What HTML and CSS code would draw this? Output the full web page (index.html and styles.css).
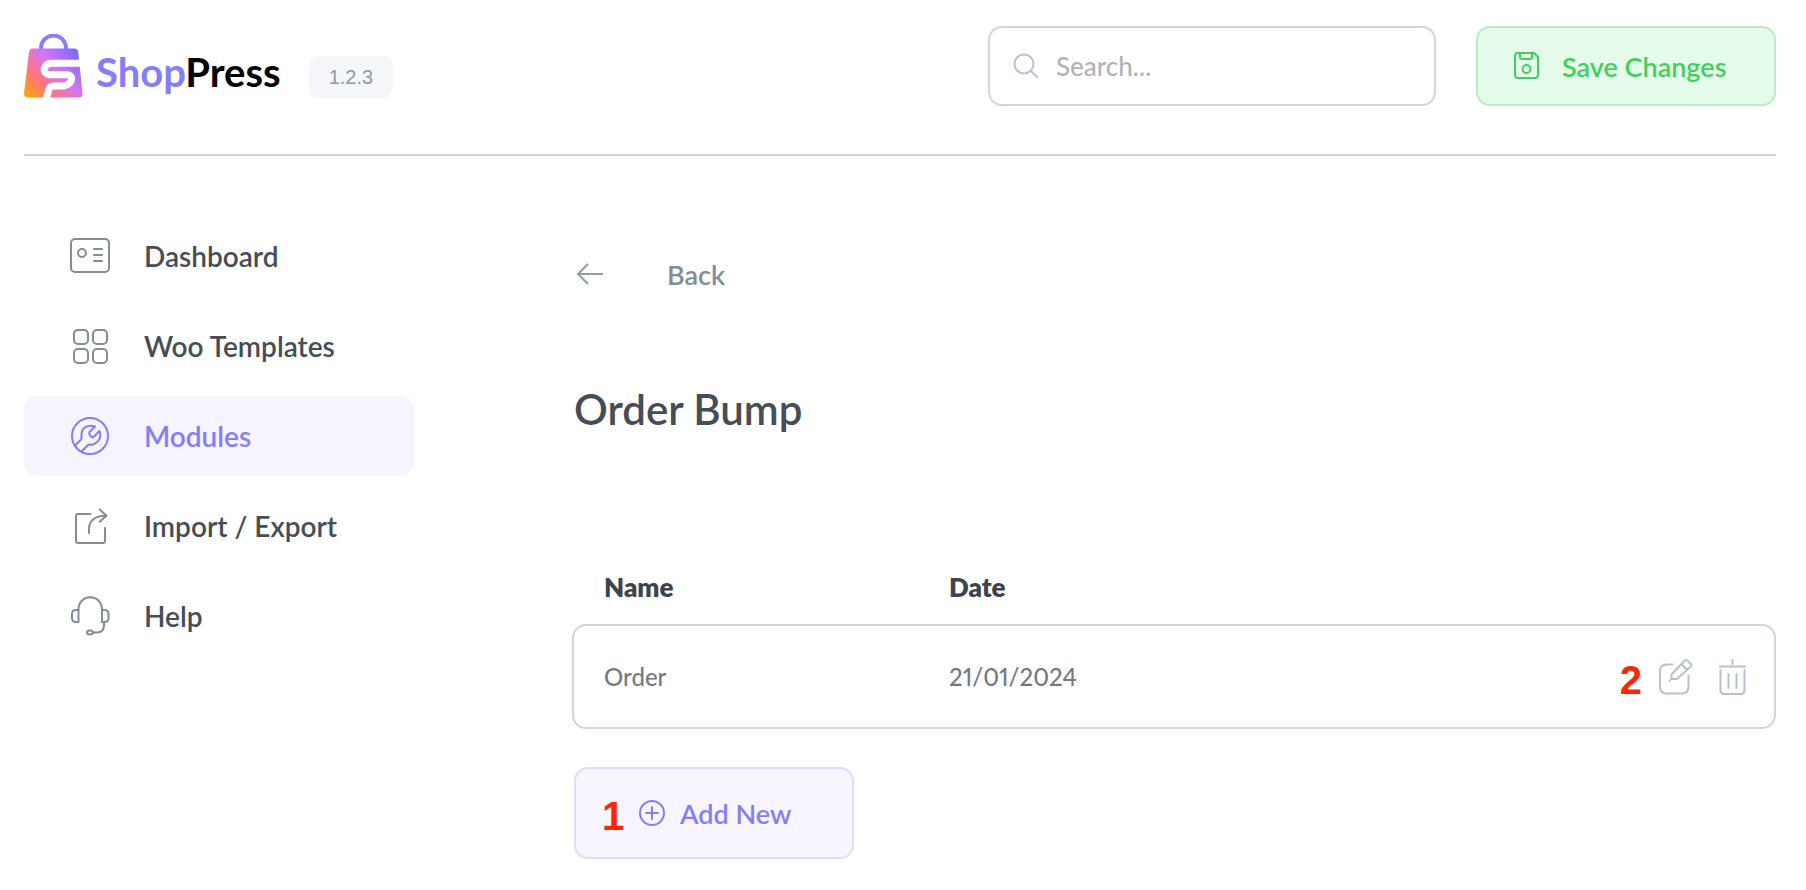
FILE: index.html
```
<!DOCTYPE html>
<html lang="en">
<head>
  <meta charset="UTF-8" />
  <meta name="viewport" content="width=device-width, initial-scale=1.0" />
  <title>ShopPress | Order Bump</title>
  <link rel="stylesheet" href="styles.css">
</head>
<body>
  <header class="header">
    <a href="#" class="logo">
      <svg width="59" height="64" viewBox="0 0 59 64" fill="none">
        <defs>
          <linearGradient id="bag" x1="2" y1="60" x2="52" y2="14" gradientUnits="userSpaceOnUse">
            <stop offset="0" stop-color="#ffa20f" />
            <stop offset="0.3" stop-color="#ff7384" />
            <stop offset="0.6" stop-color="#cf77fb" />
            <stop offset="1" stop-color="#7468ff" />
          </linearGradient>
        </defs>
        <path d="M17 16v-2a12.500 12.500 0 0 1 25 0v2" stroke="#8f7bff" stroke-width="4" />
        <path d="M9 14.500h41q4 0 4.300 4l4.200 41q.3 4-3.500 4H4q-4 0-4-4l5-41q.4-4 4-4z" fill="url(#bag)" />
        <path d="M59 29.300H28q-6 0-7.500 5t5 6.500H43q5 0 4.500 4.500t-7.500 6.700H31q-5 0-6 3l-2.500 9.500" stroke="#fff" stroke-width="7" />
      </svg>
      <span class="logo-text">Shop<span class="logo-dark">Press</span></span>
    </a>
    <span class="version">1.2.3</span>

    <label class="search">
      <svg width="28" height="28" viewBox="0 0 28 28" fill="none" stroke="#b8c1d0" stroke-width="2" stroke-linecap="round">
        <circle cx="12" cy="12" r="9.500" />
        <path d="M19 19l6 6" />
      </svg>
      <input type="text" placeholder="Search..." aria-label="Search" />
    </label>

    <button type="button" class="btn btn-save">
      <svg width="28" height="28" viewBox="0 0 28 28" fill="none" stroke="currentColor" stroke-width="2" stroke-linejoin="round">
        <path d="M6 1h16l4 4v18q0 3-3 3H6q-3 0-3-3V4q0-3 3-3z" />
        <path d="M8 1v4q0 2 2 2h8q2 0 2-2V1" />
        <circle cx="14.500" cy="17" r="4" />
      </svg>
      Save Changes
    </button>
  </header>

  <div class="layout">
    <nav class="sidebar">
      <a href="#">
        <svg width="40" height="40" viewBox="0 0 40 40">
          <rect x="1" y="3" width="38" height="33" rx="4" />
          <circle cx="12" cy="17" r="4" />
          <path d="M24 13h8M24 19h8M24 25h8" />
        </svg>
        Dashboard
      </a>
      <a href="#">
        <svg width="40" height="40" viewBox="0 0 40 40">
          <rect x="4" y="4" width="14" height="14" rx="4" />
          <rect x="23" y="4" width="14" height="14" rx="4" />
          <rect x="4" y="23" width="14" height="14" rx="4" />
          <rect x="23" y="23" width="14" height="14" rx="4" />
        </svg>
        Woo Templates
      </a>
      <a href="#" class="active">
        <svg width="40" height="40" viewBox="0 0 40 40">
          <circle cx="20" cy="20" r="18" />
          <path d="M5 29.500l6.500-6.500v-4c0-7 6-11 13.500-8.500L19.500 16q-1 4 3.500 5.500l6.500-6.500c3 7-3 15-11 13.500L12 35" />
        </svg>
        Modules
      </a>
      <a href="#">
        <svg width="40" height="40" viewBox="0 0 40 40">
          <path d="M20.500 8H8q-2 0-2 2v25q0 2 2 2h25q2 0 2-2V22" />
          <path d="M19 27v-4q0-13 17-13.300M29.700 3.500l6.800 6.200-6.800 6" />
        </svg>
        Import / Export
      </a>
      <a href="#">
        <svg width="40" height="40" viewBox="0 0 40 40">
          <path d="M8.500 14v-1a11.500 11.500 0 0 1 23.500 0v13" />
          <path d="M8.500 14v12H6q-4 0-4-4v-4q0-4 4-4zM32 14h2.500q4 0 4 4v4q0 4-4 4H32z" />
          <path d="M34 26v3q0 7.500-7 7.500h-4" />
          <ellipse cx="20" cy="36.500" rx="3" ry="2" />
        </svg>
        Help
      </a>
    </nav>

    <main class="content">
      <a href="#" class="back">
        <svg width="28" height="24" viewBox="0 0 28 24" fill="none" stroke="#929aab" stroke-width="2">
          <path d="M28 12H3M13 2L3 12l10 10" />
        </svg>
        Back
      </a>

      <h1>Order Bump</h1>

      <table class="orders">
        <thead>
          <tr>
            <th class="col-name">Name</th>
            <th>Date</th>
            <th></th>
          </tr>
        </thead>
        <tbody>
          <tr>
            <td>Order</td>
            <td>21/01/2024</td>
            <td>
              <div class="actions">
                <span class="mark mark-edit">2</span>
                <button type="button" aria-label="Edit">
                  <svg width="36" height="38" viewBox="0 0 36 38">
                    <path d="M14.700 6.500H9q-7 0-7 7v15q0 7 7 7h14.500q7 0 7-7v-11" />
                    <path d="M11.500 23l2-2.500v-4L26.500 2.800q1.500-1.500 3 0l3 3q1.500 1.500 0 3L19 21h-4.500M23.500 6l5.500 5.500" />
                  </svg>
                </button>
                <button type="button" aria-label="Delete">
                  <svg width="36" height="38" viewBox="0 0 36 38">
                    <path d="M6 8.500h25M18.500 2v4M6.500 12v20q0 4 4 4h16q4 0 4-4V12M14.500 16v14M22.500 16v14" />
                  </svg>
                </button>
              </div>
            </td>
          </tr>
        </tbody>
      </table>

      <button type="button" class="btn btn-add">
        <span class="mark mark-add">1</span>
        <svg width="28" height="28" viewBox="0 0 28 28" fill="none" stroke="currentColor" stroke-width="2" stroke-linecap="round">
          <circle cx="14" cy="14" r="12" />
          <path d="M8 14h12M14 8v12" />
        </svg>
        Add New
      </button>
    </main>
  </div>
</body>
</html>
```
FILE: styles.css
```
* { box-sizing: border-box; }
body {
  font-family: Lato, sans-serif;
  font-size: 28px;
  font-weight: 600;
  color: #464d56;
  background: #fff;
  margin: 0;
  padding: 0 30px 0 24px;
}
a {
  color: inherit;
  text-decoration: none;
}
svg {
  display: block;
  flex: none;
}
button {
  font: inherit;
  color: inherit;
  cursor: pointer;
}

/* Header */
.header {
  display: flex;
  align-items: center;
  padding: 26px 0 48px;
  border-bottom: 2px solid #d1d5de;
}
.logo {
  display: flex;
  align-items: center;
  gap: 13px;
}
.logo-text {
  font-size: 40px;
  font-weight: 700;
  line-height: 48px;
  padding-top: 12px;
  color: #857dfa;
}
.logo-dark {
  color: #000;
}
.version {
  margin: 22px auto 0 28px;
  padding: 0 20px;
  font-family: "Liberation Sans", sans-serif;
  font-size: 20px;
  font-weight: 400;
  line-height: 42px;
  color: #8d99a8;
  background: #f4f6fa;
  border-radius: 10px;
}
.search {
  display: flex;
  align-items: center;
  gap: 16px;
  width: 448px;
  height: 80px;
  margin-right: 40px;
  padding: 0 22px;
  border: 2px solid #d1d5de;
  border-radius: 14px;
}
.search input {
  flex: 1;
  min-width: 0;
  padding: 0;
  border: none;
  outline: none;
  background: none;
  font: inherit;
  font-size: 26px;
  font-weight: 500;
}
.search input::placeholder {
  color: #b2b3b7;
}
.btn {
  position: relative;
  display: flex;
  align-items: center;
  font-size: 27px;
  white-space: nowrap;
  border-radius: 14px;
}
.btn-save {
  width: 300px;
  height: 80px;
  gap: 22px;
  padding: 0 34px;
  color: #42d05c;
  background: #e6fcea;
  border: 2px solid #bdebc6;
}

/* Layout */
.layout {
  display: flex;
  gap: 158px;
  padding-top: 60px;
}
.sidebar {
  display: flex;
  flex-direction: column;
  flex: none;
  width: 390px;
  gap: 10px;
}
.sidebar a {
  display: flex;
  align-items: center;
  gap: 34px;
  height: 80px;
  padding: 0 46px;
  border-radius: 14px;
}
.sidebar svg {
  fill: none;
  stroke: #868c95;
  stroke-width: 2;
  stroke-linecap: round;
  stroke-linejoin: round;
}
.sidebar .active {
  color: #857dfa;
  background: #f5f4ff;
}
.sidebar .active svg {
  stroke: #857dfa;
}

/* Content */
.content {
  flex: 1;
  padding-top: 38px;
}
.back {
  display: inline-flex;
  align-items: center;
  gap: 64px;
  height: 40px;
  margin-left: 3px;
  font-size: 27px;
  color: #858c94;
}
h1 {
  margin: 90px 0 129px 2px;
  font-size: 42px;
  font-weight: 600;
  line-height: 50px;
}
.orders {
  width: 100%;
  border-spacing: 0;
  text-align: left;
}
.orders th {
  height: 61px;
  padding: 0 0 14px;
  font-size: 26px;
  font-weight: 800;
  color: #3d444d;
}
.orders td {
  height: 105px;
  padding: 0;
  font-size: 24px;
  font-weight: 500;
  font-variant-numeric: proportional-nums;
  color: #76797f;
  border: solid #d1d5de;
  border-width: 2px 0;
}
.orders th:first-child {
  padding-left: 32px;
}
.orders td:first-child {
  padding-left: 30px;
  border-left-width: 2px;
  border-radius: 14px 0 0 14px;
}
.orders td:last-child {
  padding-right: 24px;
  border-right-width: 2px;
  border-radius: 0 14px 14px 0;
}
.col-name {
  width: 377px;
}
.actions {
  position: relative;
  display: flex;
  justify-content: flex-end;
  gap: 20px;
}
.actions button {
  padding: 0;
  border: none;
  background: none;
}
.actions svg {
  fill: none;
  stroke: #b9c1cf;
  stroke-width: 2;
  stroke-linecap: round;
  stroke-linejoin: round;
}
.btn-add {
  width: 280px;
  margin: 38px 0 0 2px;
  height: 92px;
  gap: 14px;
  padding: 0 0 0 62px;
  color: #857dfa;
  background: #f7f5ff;
  border: 2px solid #dfdcff;
}

/* Numbered callouts */
.mark {
  position: absolute;
  font: bold 40px/40px "Liberation Sans", sans-serif;
  color: #ff2600;
}
.mark-edit {
  top: 2px;
  right: 108px;
}
.mark-add {
  top: 27px;
  left: 26px;
}
```
